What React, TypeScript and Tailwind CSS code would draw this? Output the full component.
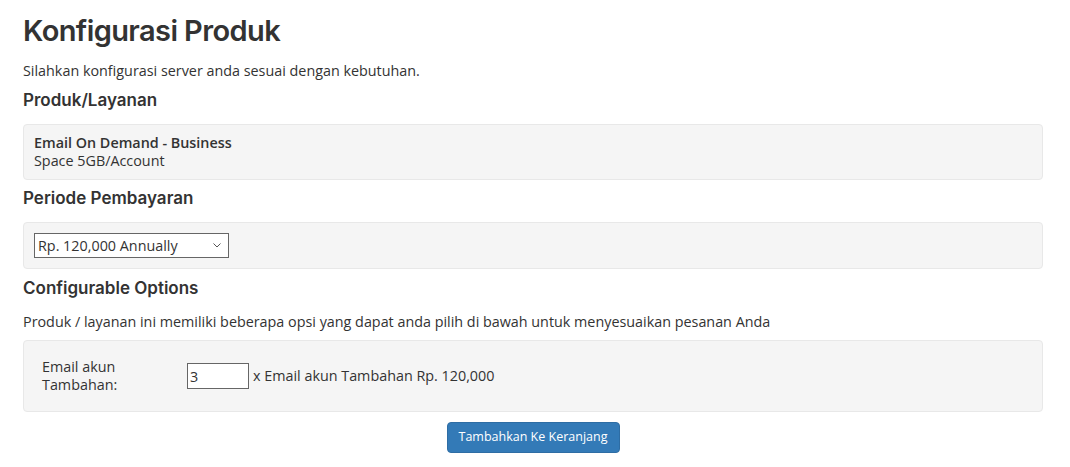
const BODY = "font-['Open_Sans',sans-serif]";
const HEAD = "font-['Inter',sans-serif]";

function Heading({ children, className = "" }: { children: string; className?: string }) {
  return (
    <h3 className={`${HEAD} text-[17px] leading-[24px] font-semibold text-[#333] ${className}`}>
      {children}
    </h3>
  );
}

export default function App() {
  return (
    <div className={`${BODY} bg-white min-h-[467px] text-[14.35px] text-[#333] pl-[23px] pr-[27px] pt-[13px]`}>
      {/* Title */}
      <h1 className={`${HEAD} text-[29px] leading-[36px] font-semibold tracking-[-0.6px] text-[#333]`}>
        Konfigurasi Produk
      </h1>
      <p className="mt-[12px] leading-[20px]">Silahkan konfigurasi server anda sesuai dengan kebutuhan.</p>

      {/* Produk/Layanan */}
      <Heading className="mt-[7px]">Produk/Layanan</Heading>
      <div className="mt-[12px] bg-[#f5f5f5] border border-[#e8e8e8] rounded-[4px] px-[10px] py-[9px] leading-[18px]">
        <div className="font-semibold">Email On Demand - Business</div>
        <div>Space 5GB/Account</div>
      </div>

      {/* Periode */}
      <Heading className="mt-[6px]">Periode Pembayaran</Heading>
      <div className="mt-[12px] bg-[#f5f5f5] border border-[#e8e8e8] rounded-[4px] px-[10px] py-[10px]">
        <div className="relative w-[195px] h-[25px]">
          <select className="appearance-none w-full h-full bg-white border border-[#666] pl-[3px] text-[14.35px] text-[#333] outline-none">
            <option>Rp. 120,000 Annually</option>
          </select>
          <svg
            className="absolute right-[8px] top-[10px] pointer-events-none"
            width="8"
            height="5"
            viewBox="0 0 8 5"
            fill="none"
            stroke="#555"
            strokeWidth="1"
          >
            <path d="M0.5 0.5 L4 4 L7.5 0.5" />
          </svg>
        </div>
      </div>

      {/* Configurable Options */}
      <Heading className="mt-[7px]">Configurable Options</Heading>
      <p className="mt-[12px] leading-[20px]">
        Produk / layanan ini memiliki beberapa opsi yang dapat anda pilih di bawah untuk menyesuaikan pesanan Anda
      </p>
      <div className="mt-[8px] bg-[#f5f5f5] border border-[#e8e8e8] rounded-[4px] pl-[18px] pr-[10px] py-[17px] flex items-center">
        <label className="w-[145px] pr-[50px] leading-[18px]">Email akun Tambahan:</label>
        <input
          type="text"
          defaultValue="3"
          className="w-[62px] h-[26px] bg-white border border-[#666] px-[2px] text-[14.35px] text-[#333] outline-none"
        />
        <span className="ml-[4px] leading-[20px]">x Email akun Tambahan Rp. 120,000</span>
      </div>

      <div className="mt-[10px] flex justify-center">
        <button className="w-[173px] h-[31px] bg-[#337ab7] border border-[#2e6da4] rounded-[4px] text-white text-[12.5px]">
          Tambahkan Ke Keranjang
        </button>
      </div>
    </div>
  );
}
